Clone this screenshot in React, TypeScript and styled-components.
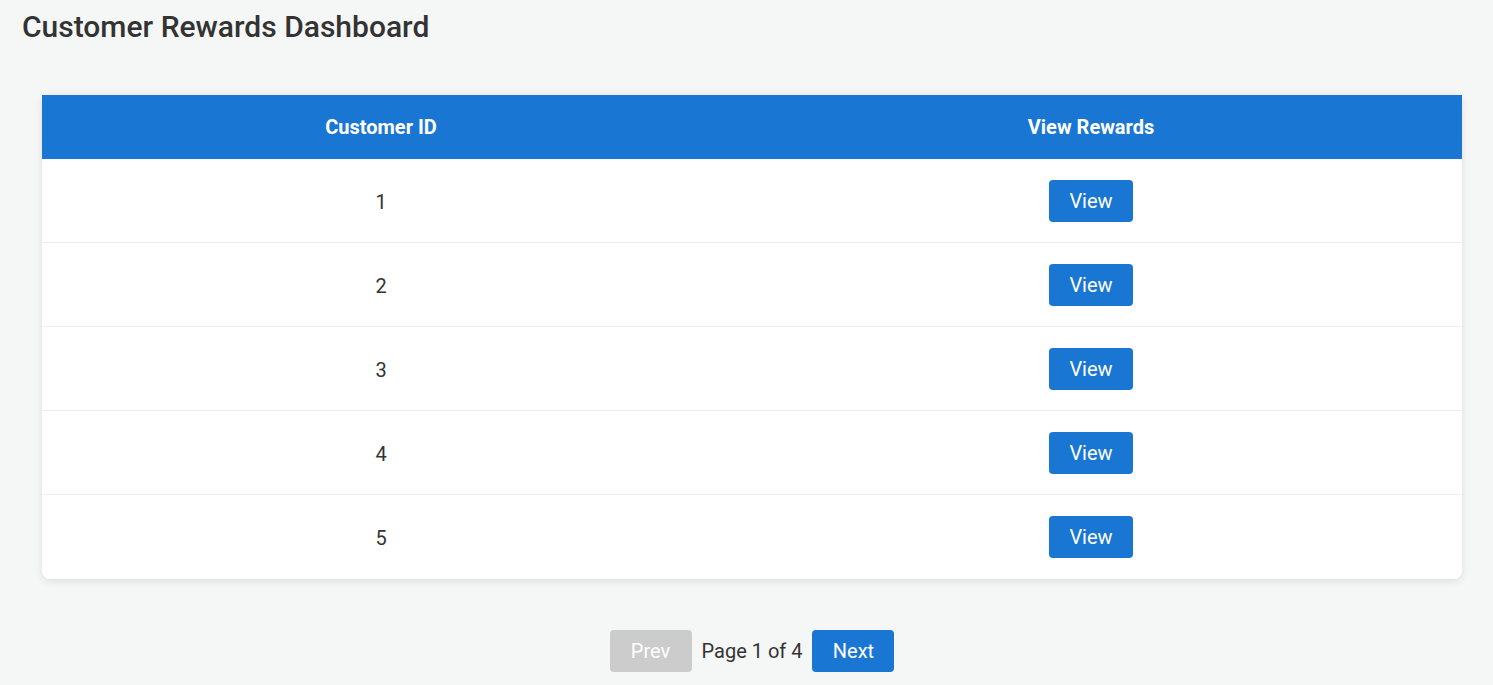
import { createGlobalStyle, styled } from "styled-components";

const GlobalStyle = createGlobalStyle`
	body {
		margin: 0;
		background: #f5f6f6;
		font-family: Roboto, "Liberation Sans", Arial, sans-serif;
		color: #333;
	}
`;

const Page = styled.div`
	padding: 8px 22px 12px;
`;
const Title = styled.h1`
	margin: 0 0 49px;
	font-size: 30px;
	font-weight: 500;
	line-height: 38px;
	color: #333;
`;
const Table = styled.div`
	margin: 0 9px 0 20px;
	background: #fff;
	border-radius: 8px;
	box-shadow: 0 2px 8px rgba(0, 0, 0, 0.1);
`;
const HeadRow = styled.div`
	display: grid;
	grid-template-columns: 678fr 742fr;
	align-items: center;
	height: 64px;
	background: #1976d2;
	color: #fff;
	font-weight: 700;
	font-size: 20px;
`;
const Row = styled.div`
	display: grid;
	grid-template-columns: 678fr 742fr;
	align-items: center;
	box-sizing: border-box;
	height: 84px;
	font-size: 20px;
	color: #333;
	&:not(:last-child) {
		border-bottom: 1px solid #eee;
	}
`;
const Cell = styled.div`
	text-align: center;
`;
const IdCell = styled(Cell)`
	padding-top: 2px;
`;
const Button = styled.button<{ $disabled?: boolean }>`
	font-family: inherit;
	font-size: 20px;
	line-height: 24px;
	height: 42px;
	padding: 0 20px;
	border: 0;
	border-radius: 4px;
	color: #fff;
	background: ${(p) => (p.$disabled ? "#cccccc" : "#1976d2")};
	cursor: ${(p) => (p.$disabled ? "default" : "pointer")};
`;
const PagerButton = styled(Button)`
	width: 82px;
	padding: 0;
`;
const Pager = styled.div`
	display: flex;
	justify-content: center;
	align-items: center;
	gap: 10px;
	margin: 51px 0 0 11px;
	font-size: 20px;
`;

export default function App() {
	const ids = [1, 2, 3, 4, 5];
	return (
		<Page>
			<GlobalStyle />
			<Title>Customer Rewards Dashboard</Title>
			<Table>
				<HeadRow>
					<Cell>Customer ID</Cell>
					<Cell>View Rewards</Cell>
				</HeadRow>
				{ids.map((id) => (
					<Row key={id}>
						<IdCell>{id}</IdCell>
						<Cell>
							<Button>View</Button>
						</Cell>
					</Row>
				))}
			</Table>
			<Pager>
				<PagerButton $disabled>Prev</PagerButton>
				<span>Page 1 of 4</span>
				<PagerButton>Next</PagerButton>
			</Pager>
		</Page>
	);
}
